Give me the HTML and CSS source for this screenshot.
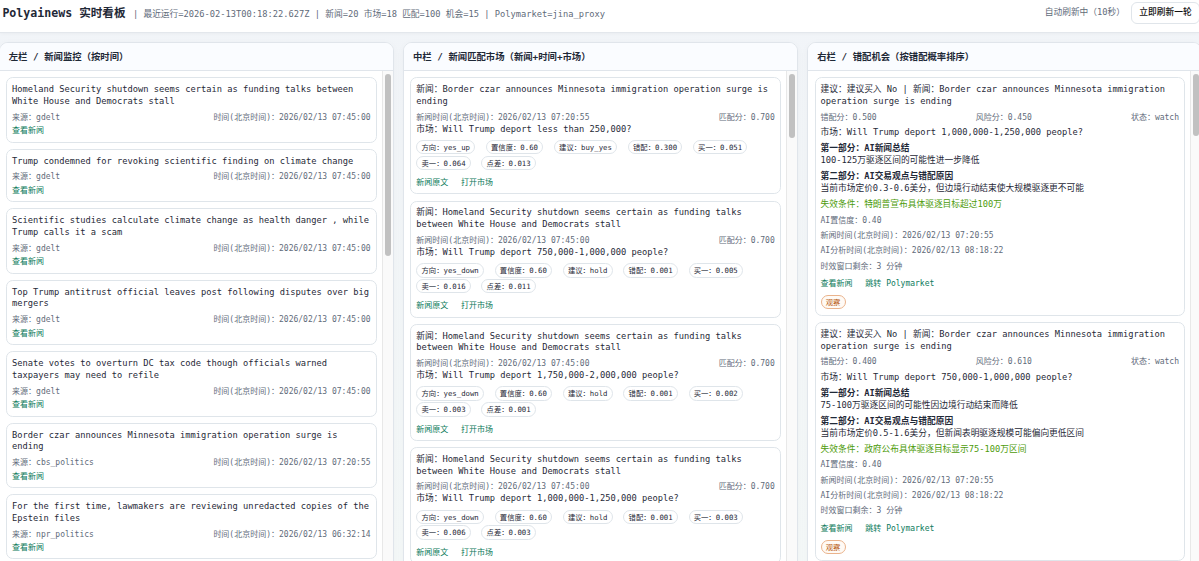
FILE: index.html
```
<!DOCTYPE html>
<html lang="zh-CN">
<head>
    <meta charset="UTF-8">
    <meta name="viewport" content="width=device-width, initial-scale=1.0">
    <title>Polyainews 实时看板</title>
    <link rel="stylesheet" href="styles.css">
</head>
<body>
    <header class="topbar">
        <h1>Polyainews 实时看板</h1>
        <span class="status">| 最近运行=2026-02-13T00:18:22.627Z | 新闻=20 市场=18 匹配=100 机会=15 | Polymarket=jina_proxy</span>
        <span class="auto">自动刷新中（10秒）</span>
        <button class="refresh">立即刷新一轮</button>
    </header>

    <main class="board">
        <section class="panel">
            <h2>左栏 / 新闻监控（按时间）</h2>
            <div class="panel-body">
                <div class="list">
                    <div class="card">
                        <div class="title">Homeland Security shutdown seems certain as funding talks between White House and Democrats stall</div>
                        <div class="meta"><span>来源：gdelt</span><span>时间(北京时间)：2026/02/13 07:45:00</span></div>
                        <div class="source"><a>查看新闻</a></div>
                    </div>
                    <div class="card">
                        <div class="title">Trump condemned for revoking scientific finding on climate change</div>
                        <div class="meta"><span>来源：gdelt</span><span>时间(北京时间)：2026/02/13 07:45:00</span></div>
                        <div class="source"><a>查看新闻</a></div>
                    </div>
                    <div class="card">
                        <div class="title">Scientific studies calculate climate change as health danger , while Trump calls it a scam</div>
                        <div class="meta"><span>来源：gdelt</span><span>时间(北京时间)：2026/02/13 07:45:00</span></div>
                        <div class="source"><a>查看新闻</a></div>
                    </div>
                    <div class="card">
                        <div class="title">Top Trump antitrust official leaves post following disputes over big mergers</div>
                        <div class="meta"><span>来源：gdelt</span><span>时间(北京时间)：2026/02/13 07:45:00</span></div>
                        <div class="source"><a>查看新闻</a></div>
                    </div>
                    <div class="card">
                        <div class="title">Senate votes to overturn DC tax code though officials warned taxpayers may need to refile</div>
                        <div class="meta"><span>来源：gdelt</span><span>时间(北京时间)：2026/02/13 07:45:00</span></div>
                        <div class="source"><a>查看新闻</a></div>
                    </div>
                    <div class="card">
                        <div class="title">Border czar announces Minnesota immigration operation surge is ending</div>
                        <div class="meta"><span>来源：cbs_politics</span><span>时间(北京时间)：2026/02/13 07:20:55</span></div>
                        <div class="source"><a>查看新闻</a></div>
                    </div>
                    <div class="card">
                        <div class="title">For the first time, lawmakers are reviewing unredacted copies of the Epstein files</div>
                        <div class="meta"><span>来源：npr_politics</span><span>时间(北京时间)：2026/02/13 06:32:14</span></div>
                        <div class="source"><a>查看新闻</a></div>
                    </div>
                </div>
                <div class="scroll"><div class="thumb thumb-news"></div></div>
            </div>
        </section>

        <section class="panel">
            <h2>中栏 / 新闻匹配市场（新闻+时间+市场）</h2>
            <div class="panel-body">
                <div class="list">
                    <div class="card">
                        <div class="title">新闻：Border czar announces Minnesota immigration operation surge is ending</div>
                        <div class="meta"><span>新闻时间(北京时间)：2026/02/13 07:20:55</span><span>匹配分：0.700</span></div>
                        <div class="market">市场：Will Trump deport less than 250,000?</div>
                        <div class="chips">
                            <span class="chip">方向：yes_up</span>
                            <span class="chip">置信度：0.60</span>
                            <span class="chip">建议：buy_yes</span>
                            <span class="chip">错配：0.300</span>
                            <span class="chip">买一：0.051</span>
                            <span class="chip">卖一：0.064</span>
                            <span class="chip">点差：0.013</span>
                        </div>
                        <div class="links"><a>新闻原文</a><a>打开市场</a></div>
                    </div>
                    <div class="card">
                        <div class="title">新闻：Homeland Security shutdown seems certain as funding talks between White House and Democrats stall</div>
                        <div class="meta"><span>新闻时间(北京时间)：2026/02/13 07:45:00</span><span>匹配分：0.700</span></div>
                        <div class="market">市场：Will Trump deport 750,000-1,000,000 people?</div>
                        <div class="chips">
                            <span class="chip">方向：yes_down</span>
                            <span class="chip">置信度：0.60</span>
                            <span class="chip">建议：hold</span>
                            <span class="chip">错配：0.001</span>
                            <span class="chip">买一：0.005</span>
                            <span class="chip">卖一：0.016</span>
                            <span class="chip">点差：0.011</span>
                        </div>
                        <div class="links"><a>新闻原文</a><a>打开市场</a></div>
                    </div>
                    <div class="card">
                        <div class="title">新闻：Homeland Security shutdown seems certain as funding talks between White House and Democrats stall</div>
                        <div class="meta"><span>新闻时间(北京时间)：2026/02/13 07:45:00</span><span>匹配分：0.700</span></div>
                        <div class="market">市场：Will Trump deport 1,750,000-2,000,000 people?</div>
                        <div class="chips">
                            <span class="chip">方向：yes_down</span>
                            <span class="chip">置信度：0.60</span>
                            <span class="chip">建议：hold</span>
                            <span class="chip">错配：0.001</span>
                            <span class="chip">买一：0.002</span>
                            <span class="chip">卖一：0.003</span>
                            <span class="chip">点差：0.001</span>
                        </div>
                        <div class="links"><a>新闻原文</a><a>打开市场</a></div>
                    </div>
                    <div class="card">
                        <div class="title">新闻：Homeland Security shutdown seems certain as funding talks between White House and Democrats stall</div>
                        <div class="meta"><span>新闻时间(北京时间)：2026/02/13 07:45:00</span><span>匹配分：0.700</span></div>
                        <div class="market">市场：Will Trump deport 1,000,000-1,250,000 people?</div>
                        <div class="chips">
                            <span class="chip">方向：yes_down</span>
                            <span class="chip">置信度：0.60</span>
                            <span class="chip">建议：hold</span>
                            <span class="chip">错配：0.001</span>
                            <span class="chip">买一：0.003</span>
                            <span class="chip">卖一：0.006</span>
                            <span class="chip">点差：0.003</span>
                        </div>
                        <div class="links"><a>新闻原文</a><a>打开市场</a></div>
                    </div>
                </div>
                <div class="scroll"><div class="thumb thumb-match"></div></div>
            </div>
        </section>

        <section class="panel">
            <h2>右栏 / 错配机会（按错配概率排序）</h2>
            <div class="panel-body">
                <div class="list">
                    <div class="card">
                        <div class="title">建议：建议买入 No | 新闻：Border czar announces Minnesota immigration operation surge is ending</div>
                        <div class="meta"><span>错配分：0.500</span><span>风险分：0.450</span><span>状态：watch</span></div>
                        <div class="line">市场：Will Trump deport 1,000,000-1,250,000 people?</div>
                        <div class="part"><b>第一部分：AI新闻总结</b><br>100-125万驱逐区间的可能性进一步降低</div>
                        <div class="part"><b>第二部分：AI交易观点与错配原因</b><br>当前市场定价0.3-0.6美分，但边境行动结束使大规模驱逐更不可能</div>
                        <div class="line invalid">失效条件：特朗普宣布具体驱逐目标超过100万</div>
                        <div class="info">AI置信度：0.40</div>
                        <div class="info">新闻时间(北京时间)：2026/02/13 07:20:55</div>
                        <div class="info">AI分析时间(北京时间)：2026/02/13 08:18:22</div>
                        <div class="info">时效窗口剩余：3 分钟</div>
                        <div class="links"><a>查看新闻</a><a>跳转 Polymarket</a></div>
                        <span class="chip watch">观察</span>
                    </div>
                    <div class="card">
                        <div class="title">建议：建议买入 No | 新闻：Border czar announces Minnesota immigration operation surge is ending</div>
                        <div class="meta"><span>错配分：0.400</span><span>风险分：0.610</span><span>状态：watch</span></div>
                        <div class="line">市场：Will Trump deport 750,000-1,000,000 people?</div>
                        <div class="part"><b>第一部分：AI新闻总结</b><br>75-100万驱逐区间的可能性因边境行动结束而降低</div>
                        <div class="part"><b>第二部分：AI交易观点与错配原因</b><br>当前市场定价0.5-1.6美分，但新闻表明驱逐规模可能偏向更低区间</div>
                        <div class="line invalid">失效条件：政府公布具体驱逐目标显示75-100万区间</div>
                        <div class="info">AI置信度：0.40</div>
                        <div class="info">新闻时间(北京时间)：2026/02/13 07:20:55</div>
                        <div class="info">AI分析时间(北京时间)：2026/02/13 08:18:22</div>
                        <div class="info">时效窗口剩余：3 分钟</div>
                        <div class="links"><a>查看新闻</a><a>跳转 Polymarket</a></div>
                        <span class="chip watch">观察</span>
                    </div>
                </div>
                <div class="scroll"><div class="thumb thumb-chance"></div></div>
            </div>
        </section>
    </main>
</body>
</html>
```
FILE: styles.css
```
* { box-sizing: border-box; }
body { margin: 0; height: 100vh; overflow: hidden; display: flex; flex-direction: column; background: linear-gradient(180deg, #f1f4f8, #f4f8f8); color: #1f2937; font: 8.73px/11.8px "DejaVu Sans Mono", "Noto Sans CJK SC", monospace; }

.topbar { flex: none; height: 33px; padding: 1px 0 7px 2.4px; display: flex; align-items: center; background: #fff; border-bottom: 1px solid #e3e7ec; box-shadow: 0 1px 3px rgba(15, 23, 42, 0.03); white-space: nowrap; }
h1 { margin: 0 7.4px 0 0; font-size: 11.6px; line-height: 16px; }
.status, .auto { color: #5f6b7a; }
.status { padding-top: 3px; }
.auto { margin-left: auto; margin-right: 6px; }
.refresh { flex: none; height: 22px; width: 69px; margin-right: -1px; padding: 0; background: #fff; border: 1px solid #e0e5ea; border-radius: 6px; color: #111; font: inherit; font-weight: 500; }

.board { flex: none; width: 1203.4px; margin: 9px 0 0 -1.1px; display: grid; grid-template-columns: repeat(3, 1fr); gap: 9.3px; }
.panel { height: 530px; overflow: hidden; display: flex; flex-direction: column; background: #fff; border: 1px solid #e0e5eb; border-radius: 9px; box-shadow: 0 2px 8px rgba(15, 23, 42, 0.03); }
h2 { flex: none; height: 28px; margin: 0; padding: 0 8.8px; border-bottom: 1px solid #e0e5eb; background: #fafcff; font-size: 9.35px; line-height: 27px; }
.panel-body { flex: 1; min-height: 0; display: flex; }
.list { flex: 1; min-width: 0; padding: 6.3px 5.3px 0 6.2px; overflow: hidden; }

.card { margin-bottom: 6.2px; padding: 5.8px 5px 4.2px; border: 1px solid #dfe5ea; border-radius: 6.7px; background: #fff; }
.meta { display: flex; justify-content: space-between; margin-top: 4px; color: #5f6b7a; font-size: 8px; line-height: 12px; }
.source { margin-top: 1.7px; font-size: 8px; line-height: 12px; }
.card a { color: #0b7a5b; }

.chips { display: flex; flex-wrap: wrap; gap: 1.1px 10.7px; margin-top: 4.4px; }
.chip { height: 14.6px; padding: 0 4.2px; border: 1px solid #dfe5ea; border-radius: 8px; font-size: 7.33px; line-height: 13px; white-space: nowrap; }
.links { display: flex; gap: 12.8px; margin-top: 7px; font-size: 8px; line-height: 12px; }

.line { margin-top: 3.7px; }
.part { margin-top: 4.2px; }
.invalid { margin-top: 4.6px; color: #4d9b0a; }
.info { margin-top: 3.4px; color: #5f6b7a; font-size: 8px; line-height: 12px; }
.info + .links { margin-top: 5.6px; }
.watch { display: block; width: 25px; margin: 4.6px 0 1.2px; border-color: #eab38c; background: #fffaf5; color: #b85a12; }

.scroll { flex: none; width: 11px; padding: 2.5px 2px; border-left: 1px solid #e8e8e8; background: #fafafa; }
.thumb { width: 6px; border-radius: 3px; background: #c1c1c1; }
.thumb-news { height: 182px; }
.thumb-match { height: 64px; }
.thumb-chance { height: 62px; }
```
